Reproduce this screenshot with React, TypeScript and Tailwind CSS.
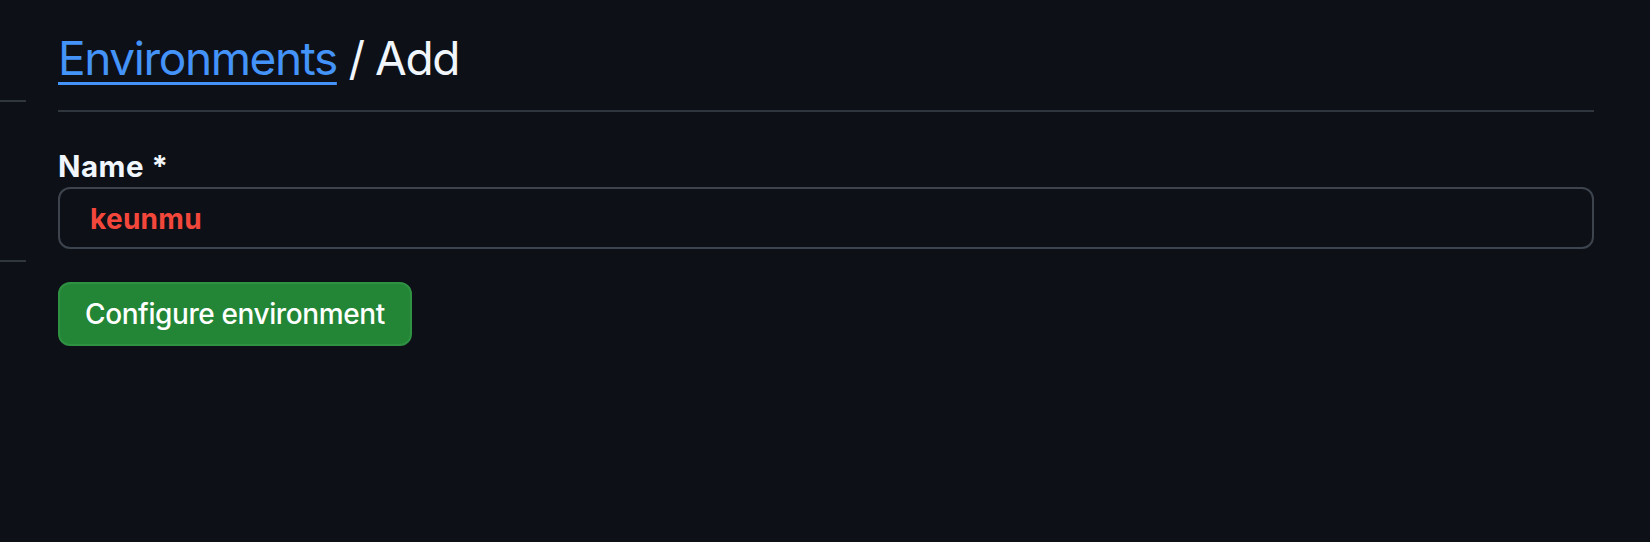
import React from "react";

export default function App() {
  return (
    <div
      className="min-h-screen w-full bg-[#0d1117] flex"
      style={{ fontFamily: "Inter, 'Noto Sans', sans-serif" }}
    >
      <aside className="w-[26px] shrink-0">
        <div className="mt-[100px] h-[162px] border-y-2 border-[#30363d]" />
      </aside>
      <main className="ml-[32px] w-[1536px] shrink-0">
        <div className="pt-[28px] pb-[22px] border-b-2 border-[#30363d]">
          <h1 className="text-[46px] leading-[60px] font-normal tracking-[-1.4px] text-[#f0f6fc]">
            <a
              href="#"
              className="text-[#4493f8] underline decoration-[3px] underline-offset-[7px]"
            >
              Environments
            </a>{" "}
            / Add
          </h1>
        </div>
        <form className="mt-[33px]" onSubmit={(e) => e.preventDefault()}>
          <label className="block text-[29.5px] leading-[42px] font-bold tracking-[0.5px] text-[#f0f6fc]">
            Name *
          </label>
          <div className="mt-[0px] h-[62px] rounded-[12px] border-2 border-[#3d444d] bg-[#0d1117] flex items-center pl-[30px]">
            <span className="text-[28px] font-bold tracking-[0.3px] text-[#f4473c] pt-[2px]">keunmu</span>
          </div>
          <button
            type="submit"
            className="mt-[33px] h-[64px] px-[25px] rounded-[12px] bg-[#238636] border-2 border-[#2f9142] text-[28px] font-medium tracking-[-0.4px] text-white"
          >
            Configure environment
          </button>
        </form>
      </main>
    </div>
  );
}
